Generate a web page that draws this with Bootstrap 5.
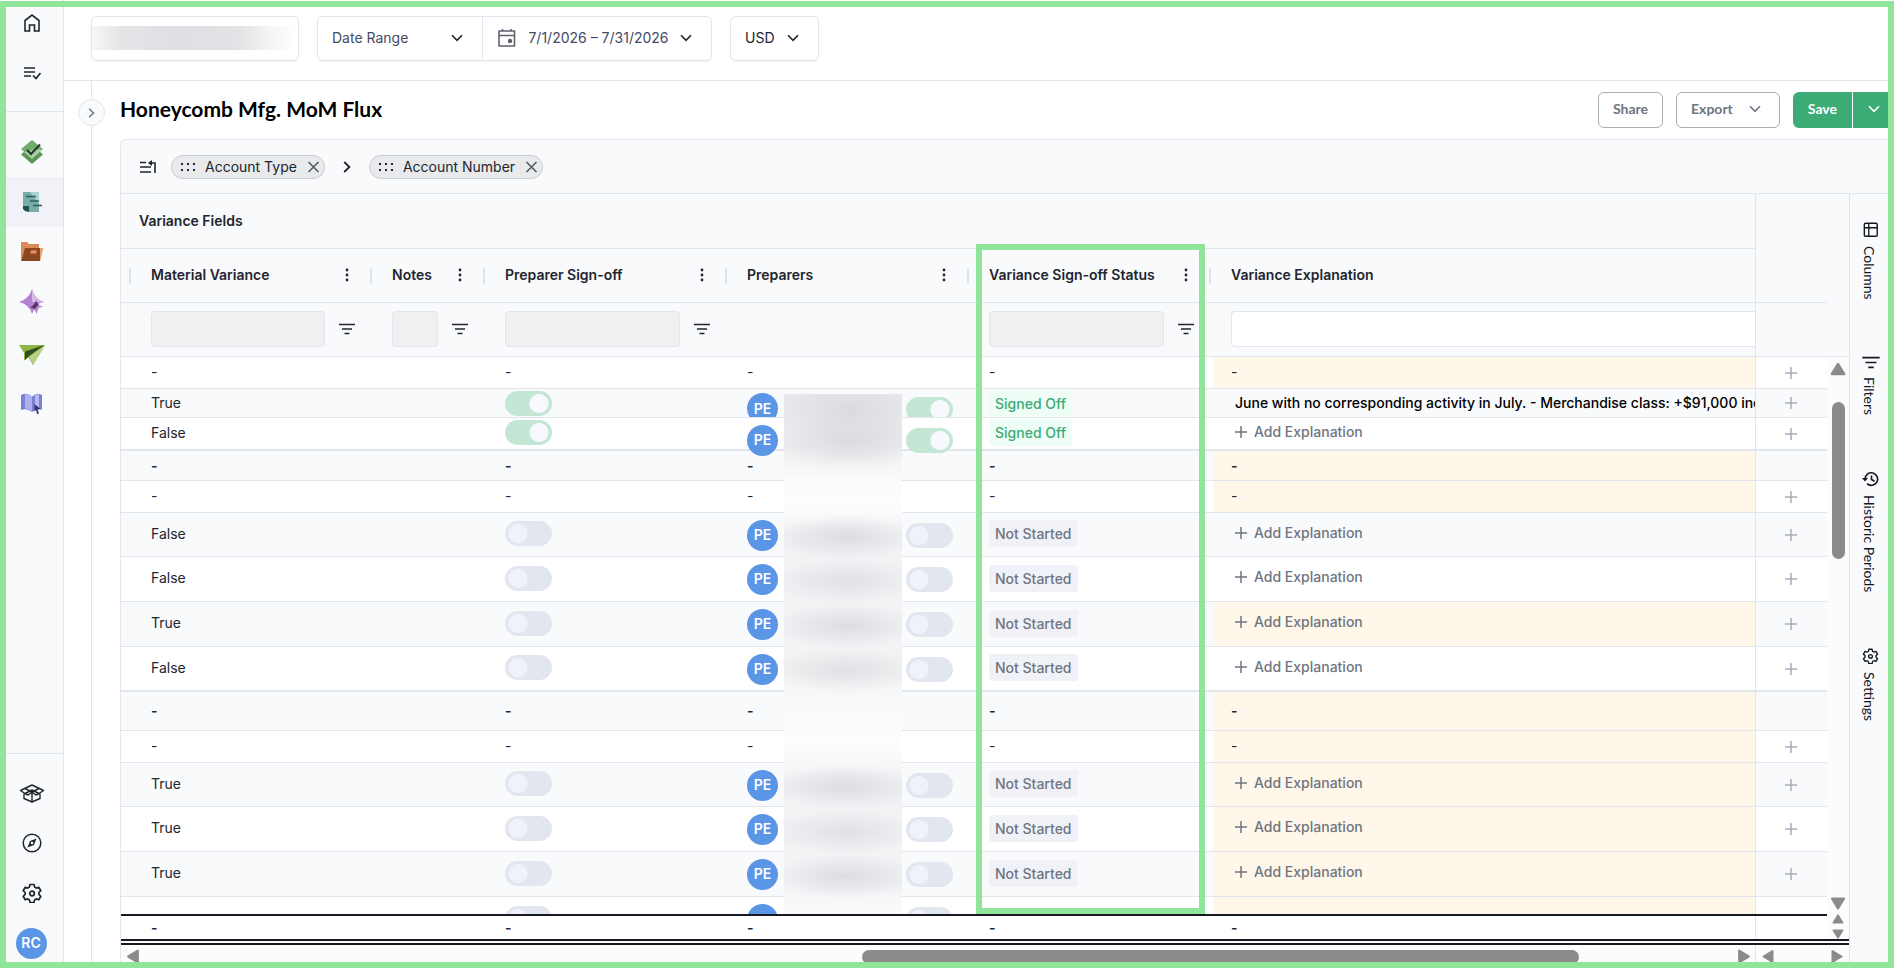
<!DOCTYPE html>
<html lang="en">
<head>
<meta charset="utf-8">
<meta name="viewport" content="width=device-width, initial-scale=1">
<title>Honeycomb Mfg. MoM Flux</title>
<link href="https://cdn.jsdelivr.net/npm/bootstrap@5.3.0/dist/css/bootstrap.min.css" rel="stylesheet">
<style>
:root{--line:#e1e5ee;--soft:#f9fafc;--ink:#22252f;--muted:#6f7480;--brand:#3dab75;--frame:#90e59b;--blue:#5b95e6;--cream:#fff7e9}
body{font-family:Inter,"Liberation Sans",sans-serif;font-size:14px;line-height:20px;color:var(--ink);background:#fff}
svg{display:block;flex:none}
button{color:inherit}
.ic{fill:none;stroke:currentColor;stroke-width:2}
.page-frame{position:fixed;inset:1px 0 0 0;border:6px solid var(--frame);pointer-events:none;z-index:20}
.app{height:100vh;padding-right:6px;overflow:hidden}
/* side rail */
.rail{width:64px;background:var(--soft);border-right:1px solid var(--line)}
.rail a,.rail-user{display:flex;align-items:center;justify-content:center;height:50px;color:var(--ink)}
.rail-user{padding-right:1px}
.rail a.active{background:#f0f2f8}
.rail-top{height:112px;border-bottom:1px solid var(--line);margin-bottom:15px}
.rail-top a:first-child{height:46px}
.rail-bottom{border-top:1px solid var(--line);padding-top:14px}
.face{width:31px;height:31px;border-radius:50%;background:var(--blue);color:#fff;font-weight:600;display:flex;align-items:center;justify-content:center;flex:none}
/* top filters */
.topbar{height:81px;border-bottom:1px solid var(--line);padding:16px 0 0 27px;gap:18px}
.pick{height:45px;border:1px solid var(--line);border-radius:6px;background:#fff;box-shadow:0 1px 2px rgba(30,40,80,.06);padding:0}
.pick button{display:flex;align-items:center;justify-content:space-between;border:0;background:none;padding:0 19px 0 14px;height:42px}
.pick .range-kind{width:164px}
.pick .range-dates{width:229px;border-left:1px solid var(--line)}
.pick .currency{width:87px}
.hidden-name{width:208px;padding-top:9px}
.hidden-name span{display:block;height:24px;background:linear-gradient(90deg,#f7f7f8,#e4e5e7 14%,#dfe0e3 40%,#e2e3e5 72%,#f6f6f6 88%,#fff)}
.slate{color:#444a66}
/* title */
.gutter{width:28px;border-right:1px solid var(--line);position:relative}
.expander{position:absolute;right:-14px;top:18px;width:27px;height:27px;border-radius:50%;border:1px solid var(--line);background:var(--soft);padding:0;display:flex;align-items:center;justify-content:center;color:var(--muted)}
.titlebar{height:58px;padding-top:11px;gap:13px}
h1{font:700 21px/26px Lato,sans-serif;color:#000}
.act{height:36px;border:1px solid #abafba;border-radius:6px;background:#fff;color:var(--muted);font:700 14px/20px Lato,sans-serif;padding:0 14px 2px}
.save{background:var(--brand);border:0;color:#fff;padding:0 15px 2px}
/* grid */
.panel{border:1px solid var(--line);border-width:1px 0 0 1px;border-top-left-radius:6px;background:var(--soft)}
.groupbar{height:54px;border-bottom:1px solid var(--line);padding-left:19px;gap:14px}
.pill{height:24px;border:1px solid #c8cbcf;border-radius:12px;background:#e8eaeb;gap:10px;padding:0 4px 0 9px}
.pill button{border:0;background:none;padding:0;color:#555b66}
.grid{table-layout:fixed;border-collapse:separate;border-spacing:0;margin:0;color:var(--ink)}
.table.grid>:not(caption)>*>*{padding:0 18px 2px;height:inherit;vertical-align:middle;border-bottom:1px solid var(--line);background:#fff;box-shadow:none;color:var(--ink);overflow:visible;white-space:nowrap}
.table.grid>thead>*>*{background:var(--soft);font-weight:600}
.table.grid>:not(caption)>*>.edge{padding:0}
.table.grid>:not(caption)>*>.pin{padding:0 2px 0 0;border-left:1px solid var(--line)}
.table.grid>:not(caption)>*>.bare{border-bottom:0}
.table.grid>thead>.h55>*{padding-bottom:0}
.table.grid>tbody>.alt>*{background:var(--soft)}
.table.grid>tbody>.h29>*{padding-bottom:0}
.table.grid>tbody>.thick>*{border-bottom-width:2px}
.table.grid>tbody>*>.flag{background:var(--cream)}
.table.grid>tfoot>*>*{padding-bottom:0;border-bottom:0;font-weight:600}
.table.grid>tbody>.total>*{font-weight:600;padding-bottom:0}
.h54{height:54px}.h55{height:55px}.h32{height:32px}.h29{height:29px}.h33{height:33px}.h30{height:30px}.h44{height:44px}.h45{height:45px}.h39{height:39px}.h23{height:23px}
.sep{position:relative}
.sep::after{content:"";position:absolute;right:2px;top:19px;width:2px;height:16px;background:#dde4ed}
.headcell{display:flex;align-items:center;justify-content:space-between;margin-right:3px}
.headcell button{border:0;background:none;padding:0;width:12px;display:flex;justify-content:center}
.fl{display:flex;align-items:center;gap:14px;margin-right:1px}
.fl input{height:36px;min-width:0;flex:1;border:1px solid var(--line);border-radius:4px;background:#f0f0f0;padding:0 8px}
.fl button{border:0;background:none;padding:0}
.table.grid>thead>*>.open{padding-right:0}
.open .fl{margin:0}
.open .fl input{background:#fff;border-right:0;border-radius:4px 0 0 4px}
.tog{appearance:none;display:block;flex:none;width:47px;height:25px;margin:0;border-radius:13px;background:radial-gradient(circle 10px at 13px 50%,#f0f2f9 9px,transparent 10px) #e1e6ef}
.tog:checked{background:radial-gradient(circle 10px at 34px 50%,#f8f9fe 9px,transparent 10px) #c3e6d5}
.prep{position:relative}
.people{position:absolute;left:18px;top:0;height:44px;width:206px;display:flex;align-items:center;justify-content:space-between}
.people.cut{height:28px;overflow:hidden;align-items:flex-start;padding-top:4px}
.people.cut .tog{margin-top:4px}
.over{z-index:2}
.tag{display:block;width:max-content;line-height:27px;padding:0 6px;border-radius:4px;font-weight:500;background:#f0f2f8;color:var(--muted)}
.tag.done{background:#eefdf6;color:var(--brand)}
.add{display:flex;align-items:center;gap:7px;border:0;background:none;padding:0 4px;margin-bottom:2px;color:var(--muted);font-weight:500}
.note{padding-left:4px;color:#000;font-weight:500;overflow:hidden}
.table.grid>tbody>*>.expl{padding-right:0;overflow:hidden}
.plus{border:0;background:none;padding:0;display:flex;margin:0 auto;color:#a9adb8}
.region{position:relative;overflow:hidden;min-width:0}
.redact{position:absolute;left:663px;width:118px;top:200px;bottom:0;z-index:3;background:
radial-gradient(ellipse 76px 34px at 66px 16px,#d9dbdf,transparent),radial-gradient(ellipse 70px 28px at 66px 46px,#d9dbdf,transparent),
radial-gradient(ellipse 76px 22px at 62px 143px,#dbdde1,transparent),radial-gradient(ellipse 76px 22px at 62px 187px,#dfe1e4,transparent),
radial-gradient(ellipse 76px 22px at 62px 232px,#dbdde1,transparent),radial-gradient(ellipse 76px 22px at 62px 276px,#dfe1e4,transparent),
radial-gradient(ellipse 76px 22px at 62px 393px,#dbdde1,transparent),radial-gradient(ellipse 76px 22px at 62px 438px,#dfe1e4,transparent),
radial-gradient(ellipse 76px 22px at 62px 482px,#dbdde1,transparent),
linear-gradient(#e9eaec,#ebecee 50px,#fafafb 84px,#fdfdfe 112px,#f1f2f4 140px,#f2f3f4 282px,#f9fafc 312px,#fdfdfe 352px,#f1f2f4 386px,#f2f3f5 490px,#fafafc 518px)}
.spot{position:absolute;left:855px;width:229px;top:50px;bottom:0;border:6px solid var(--frame);z-index:4;pointer-events:none}
.vbar{width:22px;background:#fcfcfc;color:#8b8b8b}
.vbar-head{height:163px;background:var(--soft);border-bottom:1px solid var(--line)}
.thumb{background:#8b8b8b;border-radius:7px}
.vthumb{width:13px;height:157px;margin:25px 0 auto}
.totals{border-bottom:6px double #171a22}
.totals .region{border-top:2px solid #171a22}
.hbar{height:23px;background:#fcfcfc;color:#8b8b8b;padding-top:4px}
.hthumb{height:14px;margin-top:1px;width:41.5%;margin-right:158px}
.hpin{width:94px;border-left:1px solid var(--line);margin-top:-4px;padding:4px 6px 0}
.tabs{width:39px;border-left:1px solid var(--line);padding:28px 0 0 12px;display:flex;flex-direction:column;gap:56px}
.tabs button{border:0;background:none;padding:0;display:flex;flex-direction:column;align-items:flex-start;gap:8px;font:14px/14px Lato,sans-serif;color:#14171f}
.tabs span{writing-mode:vertical-rl}
</style>
</head>
<body>
<svg width="0" height="0" class="position-absolute" aria-hidden="true">
<symbol id="chev" viewBox="0 0 12 8"><path d="M1 1.2 6 6.4 11 1.2" fill="none" stroke="currentColor" stroke-width="1.6"/></symbol>
<symbol id="chevr" viewBox="0 0 8 12"><path d="M1.2 1 6.4 6 1.2 11" fill="none" stroke="currentColor" stroke-width="1.8"/></symbol>
<symbol id="kebab" viewBox="0 0 4 14"><g fill="currentColor"><circle cx="2" cy="2" r="1.4"/><circle cx="2" cy="7" r="1.4"/><circle cx="2" cy="12" r="1.4"/></g></symbol>
<symbol id="funnel" viewBox="0 0 16 12"><path d="M0 1.5H16M3 6H13M5.500 10.500H10.500" fill="none" stroke="currentColor" stroke-width="1.600"/></symbol>
<symbol id="pl" viewBox="0 0 12 12"><path d="M6 0V12M0 6H12" fill="none" stroke="currentColor" stroke-width="1.5"/></symbol>
<symbol id="grip" viewBox="0 0 14 8"><path d="M0 1h2M6 1h2M12 1h2M0 7h2M6 7h2M12 7h2" stroke="currentColor" stroke-width="2"/></symbol>
<symbol id="ex" viewBox="0 0 12 12"><path d="M1 1 11 11M11 1 1 11" stroke="currentColor" stroke-width="1.600"/></symbol>
<symbol id="tri" viewBox="0 0 14 12"><path d="M7 1.500 12.500 10.500H1.500Z" fill="currentColor" stroke="currentColor" stroke-width="2" stroke-linejoin="round"/></symbol>
<symbol id="tril" viewBox="0 0 12 14"><path d="M1.500 7 10.500 1.500V12.500Z" fill="currentColor" stroke="currentColor" stroke-width="2" stroke-linejoin="round"/></symbol>
<symbol id="gear" viewBox="0 0 20 20"><path d="M8 1.500h4l.6 2.600 1.700 1 2.500-.8 2 3.400-1.900 1.800v2l1.900 1.800-2 3.400-2.500-.8-1.700 1-.6 2.600H8l-.6-2.600-1.700-1-2.500.8-2-3.400 1.900-1.800v-2L1.200 7.700l2-3.400 2.500.8 1.700-1z" fill="none" stroke="currentColor" stroke-width="1.700" stroke-linejoin="round"/><circle cx="10" cy="10.500" r="2.300" fill="none" stroke="currentColor" stroke-width="1.700"/></symbol>
</svg>

<div class="app d-flex">
<nav class="rail d-flex flex-column flex-shrink-0" aria-label="Main">
  <div class="rail-top">
    <a href="#" aria-label="Home"><svg class="ic" width="18" height="20" viewBox="0 0 18 20"><path d="M2 18V7.500L9 2l7 5.500V18h-4.500v-6h-5v6z" stroke-width="1.600"/></svg></a>
    <a href="#" aria-label="Tasks" class="pt-1"><svg class="ic" width="18" height="14" viewBox="0 0 18 14"><path d="M1 2h11M1 6h11M1 10h7" stroke-width="1.600"/><path d="M10 9.500l3 3L17.500 7" stroke-width="1.700"/></svg></a>
  </div>
  <a href="#" aria-label="Close"><svg width="24" height="24" viewBox="0 0 24 24"><path d="M1 14.500 5 11l7 5 7-5 4 3.500L12 24z" fill="#5c9557"/><path d="M12 0 23 9 12 19 1 9z" fill="#74aa6d"/><path d="M12 19 23 9 12 10 4 12z" fill="#a7cf9f"/><path d="M7 10l4 4 9-9.500" fill="none" stroke="#1f3a2c" stroke-width="2"/></svg></a>
  <a href="#" aria-label="Reports" class="active"><svg width="20" height="20" viewBox="0 0 20 20"><path d="M1 0H17V20H7L1 14z" fill="#76adab"/><path d="M8 0H17V12z" fill="#a8d3d0"/><path d="M1 14H7V20L3 19 1 17z" fill="#22504f"/><path d="M4 4.500H14M8 9H17M11 13.500H20" stroke="#28605e" stroke-width="1.500"/></svg></a>
  <a href="#" aria-label="Files"><svg width="24" height="20" viewBox="0 0 24 20"><path d="M1 0H7L9 2H19V6H23L20 19H1z" fill="#dc8a5a"/><path d="M15 6h8.500L20 19H15z" fill="#eba375"/><path d="M5 6H20V19H1.500z" fill="#8c4622"/><path d="M11 8.500h6l-1 3h-6z" fill="#e8935f"/></svg></a>
  <a href="#" aria-label="Insights"><svg width="26" height="26" viewBox="0 0 26 26"><path d="M13 0Q15.500 10 25 13Q19 14 19 16L24 17.500 19.500 19 17.500 25 15.500 20 13 25Q10 15 0 13Q10 10 13 0z" fill="#b482d0"/><path d="M13 0Q15.500 10 25 13L13 13z" fill="#d9bae8"/><path d="M17.500 10.500Q17 14 20 15.500Q17.500 17 16 20.500 14 18.500 11 18.500Q16 16 17.500 10.500z" fill="#57346a"/></svg></a>
  <a href="#" aria-label="Send"><svg class="mt-1" width="26" height="21" viewBox="0 0 26 21"><path d="M0 1H26L14 21 9.500 13.500 5 16.500 5 9z" fill="#8fb544"/><path d="M26 1 14 21 10 13z" fill="#b5d080"/><path d="M25.500 1 6 7.500V16L10 12z" fill="#2e4f22"/></svg></a>
  <a href="#" aria-label="Library"><svg class="mt-1" width="22" height="22" viewBox="0 0 22 22"><path d="M0 2Q6-1 11 3.500 16-1 21 2V17Q16 15 11 19 6 15 0 17z" fill="#7d80d8"/><path d="M4 1Q8 1 11 3.500V19Q8 15.500 4 15.500z" fill="#aeb1ee"/><path d="M14 2l4-1V15l-4 1z" fill="#b7baf1"/><path d="M13.500 11l6 5-3 .5 1.500 4-2 .5-1-4-1.500 1.500z" fill="#35375f"/></svg></a>
  <div class="rail-bottom mt-auto">
    <a href="#" aria-label="Learn"><svg class="ic" width="26" height="19" viewBox="0 0 26 19"><g stroke-width="1.400" stroke-linejoin="round"><path d="M13 1 24.500 6.500 20 9.500 13 6 6 9.500 1.500 6.500z"/><path d="M6 4.500 13 8 20 4.500M13 8V18M5 9.500V14.500L13 18 21 14.500V9.500M6 9.500l3 1.500 4-3 4 3 3-1.500"/></g></svg></a>
    <a href="#" aria-label="Explore"><svg class="ic" width="20" height="20" viewBox="0 0 20 20"><circle cx="10" cy="10" r="8.800" stroke-width="1.500"/><path d="M14.500 5.500 12 12 5.500 14.500 8 8z" fill="currentColor" stroke="none"/><circle cx="10" cy="10" r="1.300" fill="#fff" stroke="none"/></svg></a>
    <a href="#" aria-label="Settings"><svg width="20" height="20"><use href="#gear"/></svg></a>
    <div class="rail-user"><span class="face">RC</span></div>
  </div>
</nav>

<div class="d-flex flex-column flex-grow-1 overflow-hidden">
  <header class="topbar d-flex align-items-start flex-shrink-0">
    <div class="pick hidden-name"><span></span></div>
    <div class="pick d-flex">
      <button class="slate range-kind" type="button">Date Range<svg class="text-dark" width="12" height="8"><use href="#chev"/></svg></button>
      <button class="slate range-dates" type="button"><svg class="ic" width="20" height="20" viewBox="0 0 20 20"><path d="M2 3h15.500v15H2zM2 7.500h15.500M5.500 1v2M14 1v2" stroke-width="1.600" stroke="#5d626d" stroke-linejoin="round"/><circle cx="13" cy="13" r="2.200" fill="#5d626d" stroke="none"/></svg>7/1/2026 – 7/31/2026<svg class="text-dark" width="12" height="8"><use href="#chev"/></svg></button>
    </div>
    <div class="pick"><button class="currency" type="button">USD<svg width="12" height="8"><use href="#chev"/></svg></button></div>
  </header>

  <div class="d-flex flex-grow-1 overflow-hidden">
    <div class="gutter flex-shrink-0"><button class="expander" type="button" aria-label="Expand"><svg width="7" height="10"><use href="#chevr"/></svg></button></div>
    <main class="d-flex flex-column flex-grow-1 overflow-hidden ps-4 ms-1">
      <div class="titlebar d-flex align-items-start flex-shrink-0">
        <h1 class="mb-0 mt-1 me-auto">Honeycomb Mfg. MoM Flux</h1>
        <button class="act" type="button">Share</button>
        <button class="act d-flex align-items-center" type="button">Export<svg class="ms-3 me-1" width="12" height="8"><use href="#chev"/></svg></button>
        <div class="d-flex">
          <button class="act save rounded-end-0" type="button">Save</button>
          <button class="act save rounded-0 border-start border-white pe-2" type="button" aria-label="More save options"><svg width="12" height="8"><use href="#chev"/></svg></button>
        </div>
      </div>

      <div class="panel d-flex flex-column flex-grow-1 overflow-hidden">
        <div class="groupbar d-flex align-items-center flex-shrink-0">
          <svg class="ic" width="17" height="14" viewBox="0 0 17 14"><path d="M0 2.500H6M0 7H11M0 12H11M9 3h6V13" stroke-width="1.600"/><path d="M12 0V6L8 3z" fill="currentColor" stroke="none"/></svg>
          <span class="pill d-flex align-items-center"><svg width="14" height="8"><use href="#grip"/></svg>Account Type<button type="button" aria-label="Remove Account Type"><svg width="13" height="12"><use href="#ex"/></svg></button></span>
          <svg class="mx-1" width="8" height="12"><use href="#chevr"/></svg>
          <span class="pill d-flex align-items-center"><svg width="14" height="8"><use href="#grip"/></svg>Account Number<button type="button" aria-label="Remove Account Number"><svg width="13" height="12"><use href="#ex"/></svg></button></span>
        </div>

        <div class="d-flex flex-grow-1 overflow-hidden">
          <div class="d-flex flex-column flex-grow-1 overflow-hidden">
            <div class="d-flex flex-grow-1 overflow-hidden">
              <div class="region flex-grow-1">
                <table class="table grid">
                  <colgroup><col style="width:12px"><col style="width:241px"><col style="width:113px"><col style="width:242px"><col style="width:242px"><col style="width:242px"><col><col style="width:72px"></colgroup>
                  <thead>
                    <tr class="h55"><th colspan="7">Variance Fields</th><th class="pin bare"></th></tr>
                    <tr class="h54"><th class="edge sep"></th>
                      <th class="sep"><div class="headcell">Material Variance<button type="button" aria-label="Menu"><svg width="4" height="14"><use href="#kebab"/></svg></button></div></th>
                      <th class="sep"><div class="headcell">Notes<button type="button" aria-label="Menu"><svg width="4" height="14"><use href="#kebab"/></svg></button></div></th>
                      <th class="sep"><div class="headcell">Preparer Sign-off<button type="button" aria-label="Menu"><svg width="4" height="14"><use href="#kebab"/></svg></button></div></th>
                      <th class="sep"><div class="headcell">Preparers<button type="button" aria-label="Menu"><svg width="4" height="14"><use href="#kebab"/></svg></button></div></th>
                      <th class="sep"><div class="headcell">Variance Sign-off Status<button type="button" aria-label="Menu"><svg width="4" height="14"><use href="#kebab"/></svg></button></div></th>
                      <th>Variance Explanation</th><th class="pin"></th></tr>
                    <tr class="h54"><th class="edge"></th>
                      <th><div class="fl"><input type="text" aria-label="Filter Material Variance"><button type="button" aria-label="Filter"><svg width="16" height="12"><use href="#funnel"/></svg></button></div></th>
                      <th><div class="fl"><input type="text" aria-label="Filter Notes"><button type="button" aria-label="Filter"><svg width="16" height="12"><use href="#funnel"/></svg></button></div></th>
                      <th><div class="fl"><input type="text" aria-label="Filter Preparer Sign-off"><button type="button" aria-label="Filter"><svg width="16" height="12"><use href="#funnel"/></svg></button></div></th>
                      <th></th>
                      <th><div class="fl"><input type="text" aria-label="Filter Variance Sign-off Status"><button type="button" aria-label="Filter"><svg width="16" height="12"><use href="#funnel"/></svg></button></div></th>
                      <th class="open"><div class="fl"><input type="text" aria-label="Filter Variance Explanation"></div></th><th class="pin"></th></tr>
                  </thead>
                  <tbody>
                    <tr class="h32"><td class="edge"></td><td>-</td><td></td><td>-</td><td>-</td><td>-</td><td class="flag">-</td><td class="pin"><button class="plus" type="button" aria-label="Add"><svg width="12" height="12"><use href="#pl"/></svg></button></td></tr>
                    <tr class="h29 alt"><td class="edge"></td><td>True</td><td></td><td><input class="tog" type="checkbox" role="switch" checked aria-label="Preparer sign-off"></td><td class="prep"><div class="people cut"><span class="face">PE</span><input class="tog" type="checkbox" role="switch" checked aria-label="Signed off"></div></td><td><span class="tag done">Signed Off</span></td><td class="expl"><div class="note">June with no corresponding activity in July. - Merchandise class: +$91,000 increase</div></td><td class="pin"><button class="plus" type="button" aria-label="Add"><svg width="12" height="12"><use href="#pl"/></svg></button></td></tr>
                    <tr class="h33 thick"><td class="edge"></td><td>False</td><td></td><td><input class="tog" type="checkbox" role="switch" checked aria-label="Preparer sign-off"></td><td class="prep over"><div class="people"><span class="face">PE</span><input class="tog" type="checkbox" role="switch" checked aria-label="Signed off"></div></td><td><span class="tag done">Signed Off</span></td><td><button class="add" type="button"><svg width="12" height="12"><use href="#pl"/></svg>Add Explanation</button></td><td class="pin"><button class="plus" type="button" aria-label="Add"><svg width="12" height="12"><use href="#pl"/></svg></button></td></tr>
                    <tr class="h30 alt total"><td class="edge"></td><td>-</td><td></td><td>-</td><td>-</td><td>-</td><td class="flag">-</td><td class="pin"></td></tr>
                    <tr class="h32"><td class="edge"></td><td>-</td><td></td><td>-</td><td>-</td><td>-</td><td class="flag">-</td><td class="pin"><button class="plus" type="button" aria-label="Add"><svg width="12" height="12"><use href="#pl"/></svg></button></td></tr>
                    <tr class="h44 alt"><td class="edge"></td><td>False</td><td></td><td><input class="tog" type="checkbox" role="switch" aria-label="Preparer sign-off"></td><td class="prep"><div class="people"><span class="face">PE</span><input class="tog" type="checkbox" role="switch" aria-label="Signed off"></div></td><td><span class="tag">Not Started</span></td><td><button class="add" type="button"><svg width="12" height="12"><use href="#pl"/></svg>Add Explanation</button></td><td class="pin"><button class="plus" type="button" aria-label="Add"><svg width="12" height="12"><use href="#pl"/></svg></button></td></tr>
                    <tr class="h45"><td class="edge"></td><td>False</td><td></td><td><input class="tog" type="checkbox" role="switch" aria-label="Preparer sign-off"></td><td class="prep"><div class="people"><span class="face">PE</span><input class="tog" type="checkbox" role="switch" aria-label="Signed off"></div></td><td><span class="tag">Not Started</span></td><td><button class="add" type="button"><svg width="12" height="12"><use href="#pl"/></svg>Add Explanation</button></td><td class="pin"><button class="plus" type="button" aria-label="Add"><svg width="12" height="12"><use href="#pl"/></svg></button></td></tr>
                    <tr class="h45 alt"><td class="edge"></td><td>True</td><td></td><td><input class="tog" type="checkbox" role="switch" aria-label="Preparer sign-off"></td><td class="prep"><div class="people"><span class="face">PE</span><input class="tog" type="checkbox" role="switch" aria-label="Signed off"></div></td><td><span class="tag">Not Started</span></td><td class="flag"><button class="add" type="button"><svg width="12" height="12"><use href="#pl"/></svg>Add Explanation</button></td><td class="pin"><button class="plus" type="button" aria-label="Add"><svg width="12" height="12"><use href="#pl"/></svg></button></td></tr>
                    <tr class="h45 thick"><td class="edge"></td><td>False</td><td></td><td><input class="tog" type="checkbox" role="switch" aria-label="Preparer sign-off"></td><td class="prep"><div class="people"><span class="face">PE</span><input class="tog" type="checkbox" role="switch" aria-label="Signed off"></div></td><td><span class="tag">Not Started</span></td><td><button class="add" type="button"><svg width="12" height="12"><use href="#pl"/></svg>Add Explanation</button></td><td class="pin"><button class="plus" type="button" aria-label="Add"><svg width="12" height="12"><use href="#pl"/></svg></button></td></tr>
                    <tr class="h39 alt total"><td class="edge"></td><td>-</td><td></td><td>-</td><td>-</td><td>-</td><td class="flag">-</td><td class="pin"></td></tr>
                    <tr class="h32"><td class="edge"></td><td>-</td><td></td><td>-</td><td>-</td><td>-</td><td class="flag">-</td><td class="pin"><button class="plus" type="button" aria-label="Add"><svg width="12" height="12"><use href="#pl"/></svg></button></td></tr>
                    <tr class="h44 alt"><td class="edge"></td><td>True</td><td></td><td><input class="tog" type="checkbox" role="switch" aria-label="Preparer sign-off"></td><td class="prep"><div class="people"><span class="face">PE</span><input class="tog" type="checkbox" role="switch" aria-label="Signed off"></div></td><td><span class="tag">Not Started</span></td><td class="flag"><button class="add" type="button"><svg width="12" height="12"><use href="#pl"/></svg>Add Explanation</button></td><td class="pin"><button class="plus" type="button" aria-label="Add"><svg width="12" height="12"><use href="#pl"/></svg></button></td></tr>
                    <tr class="h45"><td class="edge"></td><td>True</td><td></td><td><input class="tog" type="checkbox" role="switch" aria-label="Preparer sign-off"></td><td class="prep"><div class="people"><span class="face">PE</span><input class="tog" type="checkbox" role="switch" aria-label="Signed off"></div></td><td><span class="tag">Not Started</span></td><td class="flag"><button class="add" type="button"><svg width="12" height="12"><use href="#pl"/></svg>Add Explanation</button></td><td class="pin"><button class="plus" type="button" aria-label="Add"><svg width="12" height="12"><use href="#pl"/></svg></button></td></tr>
                    <tr class="h45 alt"><td class="edge"></td><td>True</td><td></td><td><input class="tog" type="checkbox" role="switch" aria-label="Preparer sign-off"></td><td class="prep"><div class="people"><span class="face">PE</span><input class="tog" type="checkbox" role="switch" aria-label="Signed off"></div></td><td><span class="tag">Not Started</span></td><td class="flag"><button class="add" type="button"><svg width="12" height="12"><use href="#pl"/></svg>Add Explanation</button></td><td class="pin"><button class="plus" type="button" aria-label="Add"><svg width="12" height="12"><use href="#pl"/></svg></button></td></tr>
                    <tr class="h45"><td class="edge"></td><td></td><td></td><td><input class="tog" type="checkbox" role="switch" aria-label="Preparer sign-off"></td><td class="prep"><div class="people"><span class="face"></span><input class="tog" type="checkbox" role="switch" aria-label="Signed off"></div></td><td></td><td class="flag"></td><td class="pin"></td></tr>
                  </tbody>
                </table>
                <div class="redact"></div>
                <div class="spot"></div>
              </div>
              <div class="vbar d-flex flex-column align-items-center flex-shrink-0">
                <div class="vbar-head w-100"></div>
                <svg class="mt-1" width="16" height="16"><use href="#tri"/></svg>
                <div class="thumb vthumb"></div>
                <svg class="mb-1" width="16" height="13"><use href="#tri" transform="rotate(180 8 6.500)"/></svg>
              </div>
            </div>
            <div class="totals d-flex flex-shrink-0">
              <div class="region flex-grow-1">
                <table class="table grid">
                  <colgroup><col style="width:12px"><col style="width:241px"><col style="width:113px"><col style="width:242px"><col style="width:242px"><col style="width:242px"><col><col style="width:72px"></colgroup>
                  <tfoot><tr class="h23"><td class="edge"></td><td>-</td><td></td><td>-</td><td>-</td><td>-</td><td>-</td><td class="pin"></td></tr></tfoot>
                </table>
              </div>
              <div class="vbar d-flex flex-column justify-content-between align-items-center flex-shrink-0">
                <svg width="14" height="10"><use href="#tri"/></svg>
                <svg width="14" height="10"><use href="#tri" transform="rotate(180 7 5)"/></svg>
              </div>
            </div>
            <div class="hbar d-flex flex-shrink-0">
              <svg class="ms-1 me-auto" width="16" height="15"><use href="#tril"/></svg>
              <div class="thumb hthumb"></div>
              <svg class="me-1" width="14" height="15"><use href="#tril" transform="rotate(180 7 7.500)"/></svg>
              <div class="hpin d-flex justify-content-between"><svg width="12" height="15"><use href="#tril"/></svg><svg width="12" height="15"><use href="#tril" transform="rotate(180 6 7.500)"/></svg></div>
            </div>
          </div>
          <aside class="tabs flex-shrink-0" aria-label="Tool panels">
            <button type="button"><svg class="ic" width="18" height="16" viewBox="0 0 18 18"><rect x="1.500" y="1.500" width="14.500" height="14.500" rx="1.500" stroke-width="1.600"/><path d="M1.500 6.500H16M6.500 1.500V16" stroke-width="1.500"/></svg><span>Columns</span></button>
            <button type="button"><svg width="18" height="13"><use href="#funnel"/></svg><span>Filters</span></button>
            <button type="button"><svg class="ic" width="17" height="16" viewBox="0 0 17 16"><path d="M3 8a6.300 6.300 0 1 1 2 4.700M9.500 4.500V8.500l3 1.700" stroke-width="1.600"/><path d="M0 7h6L3 10.500z" fill="currentColor" stroke="none"/></svg><span>Historic Periods</span></button>
            <button type="button"><svg width="17" height="16"><use href="#gear"/></svg><span>Settings</span></button>
          </aside>
        </div>
      </div>
    </main>
  </div>
</div>
</div>
<div class="page-frame"></div>
<script src="https://cdn.jsdelivr.net/npm/bootstrap@5.3.0/dist/js/bootstrap.bundle.min.js"></script>
</body>
</html>
